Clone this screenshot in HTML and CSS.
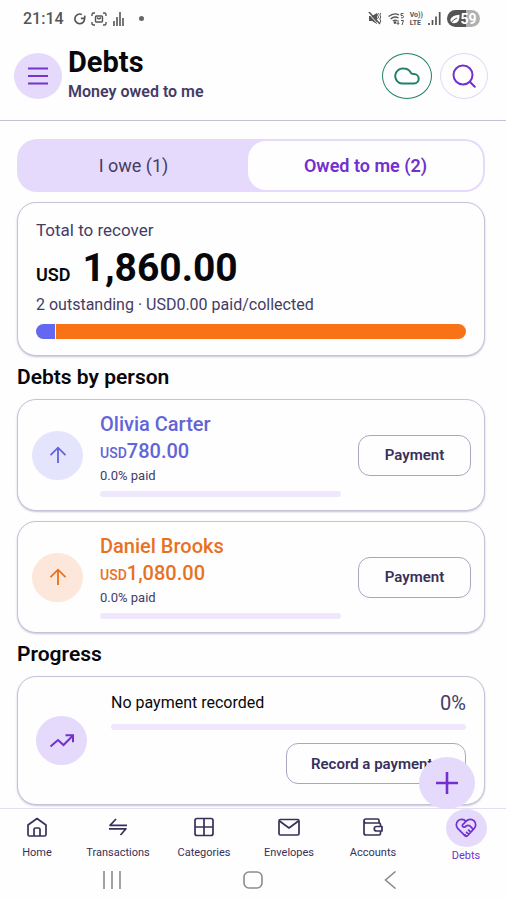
FILE: index.html
```html
<!DOCTYPE html>
<html lang="en">
<head>
<meta charset="utf-8">
<meta name="viewport" content="width=device-width, initial-scale=1">
<title>Debts</title>
<link rel="stylesheet" href="styles.css">
</head>
<body>
<div class="app">
  <div class="status">
    <span class="clock">21:14</span>
    <svg class="st-sync" width="13" height="14" viewBox="0 0 14 14" fill="none" stroke="currentColor" stroke-width="1.800"><path d="M9.500 2.200A5.200 5.200 0 1 0 12.400 6.500M8.500 6.400h4l.3-3"/></svg>
    <svg class="st-frame" width="16" height="14" viewBox="0 0 16 14" fill="none" stroke="currentColor" stroke-width="1.400"><path d="M1 4V2.500Q1 1 2.500 1H4M12 1h1.500Q15 1 15 2.500V4M15 10v1.500Q15 13 13.500 13H12M4 13H2.500Q1 13 1 11.500V10"/><rect x="4.500" y="4" width="7" height="6" rx="1"/><path d="M6 5.500q2 2.500 4 0"/></svg>
    <svg class="st-bars" width="11" height="14" viewBox="0 0 11 14" stroke="currentColor" stroke-width="1.600"><path d="M1 9v5M4 5v9M7 0v14M10 6v8"/></svg>
    <span class="st-dot"></span>
    <span class="grow"></span>
    <svg class="st-mute" width="14" height="13" viewBox="0 0 14 13"><path d="M1 4h3l5-3v11L4 9H1z" fill="currentColor"/><path d="M0 1l11 12" stroke="#fefefe" stroke-width="1"/><path d="M1 0l11 12" stroke="currentColor" stroke-width="1.500"/><path d="M10.500 1l-1 2 1 2-1 2M12.800 1l-1 2 1 2-1 2 1 2-1 2" stroke="currentColor" fill="none"/></svg>
    <svg class="st-wifi" width="17" height="14" viewBox="0 0 17 14" fill="none" stroke="currentColor" stroke-width="1.300"><path d="M.6 4.500Q6 0 11 3M2.600 7Q6.500 3.600 10.500 6M4.800 9Q7 7.400 9 8.600"/><circle cx="7" cy="10.600" r=".8" fill="currentColor"/><path d="M10 8v4M8.800 11l1.200 1.500 1.200-1.500" stroke-width="1"/><path d="M15.500 1.500h-2.500v2q2.600-.4 2.600 1.200t-2.600 1.200M13 8.500h2.500L14 13" stroke-width="1"/></svg>
    <span class="volte"><span>Vo))</span><span>LTE</span></span>
    <svg class="st-signal" width="13" height="13" viewBox="0 0 13 13" stroke="currentColor" stroke-width="1.700"><path d="M1 11v2M4.500 8v5M8 4.500V13M11.700 0v13"/></svg>
    <span class="battery"><svg width="10" height="10" viewBox="0 0 10 10"><path d="M9.500.8Q10 9 4.500 9.200 0 9 .5 5.500 1.500 1.500 9.500.8z" fill="#fff"/><path d="M1 9Q3 5.500 7 4" stroke="#555" fill="none"/></svg>59</span>
  </div>

  <header class="header">
    <button class="round menu" aria-label="Menu"><svg width="22" height="18" viewBox="0 0 22 18" stroke="#7535c8" stroke-width="2"><path d="M1 1.500h20M1 9h20M1 16.500h20"/></svg></button>
    <div class="titles">
      <h1>Debts</h1>
      <p>Money owed to me</p>
    </div>
    <button class="round cloud" aria-label="Sync"><svg width="26" height="18" viewBox="0 0 26 18" fill="none" stroke="#1f8169" stroke-width="2"><path d="M8 16.500h12a4.700 4.700 0 0 0 0-9.400q-1.800 0-2.800-.9C15.500 3 13 1.500 9.500 1.500A7.500 7.500 0 0 0 8 16.500z"/></svg></button>
    <button class="round search" aria-label="Search"><svg width="24" height="24" viewBox="0 0 24 24" fill="none" stroke="#7230cf" stroke-width="2" stroke-linecap="round"><circle cx="11" cy="11" r="9.500"/><path d="M17.800 17.800l5 5"/></svg></button>
  </header>

  <main class="main">
    <div class="tabs" role="tablist">
      <button role="tab" aria-selected="false">I owe (1)</button>
      <button role="tab" aria-selected="true" class="active">Owed to me (2)</button>
    </div>

    <section class="card total">
      <p class="label">Total to recover</p>
      <p class="sum"><span>USD</span><strong>1,860.00</strong></p>
      <p class="note">2 outstanding · USD0.00 paid/collected</p>
      <div class="split"><span class="part-a"></span><span class="part-b"></span></div>
    </section>

    <h2>Debts by person</h2>
    <div class="people">
      <article class="card person indigo">
        <span class="disc"><svg width="18" height="18" viewBox="0 0 18 18" fill="none" stroke="currentColor" stroke-width="1.800"><path d="M9 17V2M1.500 9.200L9 1.700l7.500 7.500"/></svg></span>
        <div class="info">
          <h3>Olivia Carter</h3>
          <p class="amount"><small>USD</small>780.00</p>
          <p class="paid">0.0% paid</p>
          <div class="track"></div>
        </div>
        <button class="outline">Payment</button>
      </article>
      <article class="card person orange">
        <span class="disc"><svg width="18" height="18" viewBox="0 0 18 18" fill="none" stroke="currentColor" stroke-width="1.800"><path d="M9 17V2M1.500 9.200L9 1.700l7.500 7.500"/></svg></span>
        <div class="info">
          <h3>Daniel Brooks</h3>
          <p class="amount"><small>USD</small>1,080.00</p>
          <p class="paid">0.0% paid</p>
          <div class="track"></div>
        </div>
        <button class="outline">Payment</button>
      </article>
    </div>

    <h2>Progress</h2>
    <section class="card progress">
      <span class="disc"><svg width="26" height="16" viewBox="0 0 26 16" fill="none" stroke="currentColor" stroke-width="2"><path d="M1.500 13.500l7.500-6.500 5.500 5L23.500 3M16.500 2.300h7.500v7"/></svg></span>
      <div class="info">
        <div class="line"><span>No payment recorded</span><span class="pct">0%</span></div>
        <div class="track"></div>
        <button class="outline record">Record a payment</button>
      </div>
    </section>
  </main>

  <div class="bottom">
    <button class="fab" aria-label="Add"><svg width="24" height="24" viewBox="0 0 24 24" stroke="#7230cf" stroke-width="2.600"><path d="M12 1v22M1 12h22"/></svg></button>
    <nav class="nav">
      <a href="#"><span class="ic"><svg width="20" height="20" viewBox="0 0 20 20"><path d="M1 8l9-6.500L19 8v9.500q0 1.500-1.500 1.500h-15Q1 19 1 17.500zM7 19v-6.500q0-1.500 1.500-1.500h3q1.500 0 1.500 1.500V19"/></svg></span>Home</a>
      <a href="#"><span class="ic"><svg width="20" height="20" viewBox="0 0 20 20"><path d="M19 8.300H2L8 2M1 11.800h17L12.500 18"/></svg></span>Transactions</a>
      <a href="#"><span class="ic"><svg width="20" height="20" viewBox="0 0 20 20"><rect x="1" y="1.500" width="18" height="17" rx="2"/><path d="M10 1.500v17M1 10h18"/></svg></span>Categories</a>
      <a href="#"><span class="ic"><svg width="22" height="20" viewBox="0 0 22 20"><rect x="1" y="2.500" width="20" height="15.500" rx="1.500"/><path d="M1.500 4L11 11l9.500-7"/></svg></span>Envelopes</a>
      <a href="#"><span class="ic"><svg width="20" height="20" viewBox="0 0 20 20"><path d="M16 6V3.500Q16 2 14.500 2H3Q1 2 1 4t2 2h13q1.500 0 1.500 1.500V9.500M1 4v12q0 2 2 2h13q1.500 0 1.500-1.500V14M19 9.500h-5.500a2.200 2.200 0 0 0 0 4.500H19z"/></svg></span>Accounts</a>
      <a href="#" class="current"><span class="ic"><svg width="24" height="20" viewBox="0 0 24 20"><path d="M12 3.300C9.600.8 6 .8 3.900 2.900s-2.100 5.600 0 7.700l7.200 7.300q1.200 1 2.400-.2l6.600-7c2.100-2.200 2.100-5.700 0-7.800S14.400.8 12 3.300L8.700 6.600q-.9 1.500.6 2.400 1.500.6 2.900-1.100 2-1.200 3.700 0l3.300 3.500M16.800 14.200l-2.700-2.600M14.700 16.400l-2.600-2.500M12.400 18.300l-2-2"/></svg></span>Debts</a>
    </nav>
    <div class="sysbar">
      <svg width="18" height="18" viewBox="0 0 18 18"><path d="M1 0v18M9 0v18M17 0v18"/></svg>
      <svg width="20" height="18" viewBox="0 0 20 18"><rect x="1" y="1" width="18" height="16" rx="5"/></svg>
      <svg width="12" height="18" viewBox="0 0 12 18"><path d="M11.500.5L1.500 9l10 8.500"/></svg>
    </div>
  </div>
</div>
</body>
</html>
```
FILE: styles.css
```css
* { box-sizing: border-box; }

body {
  margin: 0;
  background: #fefefe;
  color: #08080c;
  font-family: Roboto, "Liberation Sans", sans-serif;
}

h1, h2, h3, p { margin: 0; }

button {
  font: inherit;
  color: inherit;
  background: none;
  border: 0;
  padding: 0;
}

svg { display: block; flex: none; }

.app {
  display: flex;
  flex-direction: column;
  min-height: 100vh;
}

/* Status bar */
.status {
  display: flex;
  align-items: center;
  height: 37px;
  padding: 0 26px 0 23px;
  color: #555;
}
.clock { font-size: 16px; font-weight: 500; }
.st-sync { margin-left: 9px; }
.st-frame { margin-left: 5px; }
.st-bars { margin-left: 6px; }
.st-dot {
  width: 5px;
  height: 5px;
  margin-left: 15px;
  border-radius: 50%;
  background: #666;
}
.grow { flex: 1; }
.st-wifi { margin-left: 6px; }
.volte {
  display: flex;
  flex-direction: column;
  margin-left: 5px;
  font-size: 7px;
  font-weight: 700;
  line-height: 8px;
}
.st-signal { margin-left: 5px; }
.battery {
  display: flex;
  align-items: center;
  justify-content: center;
  width: 33px;
  height: 17px;
  margin-left: 6px;
  border-radius: 9px;
  background: linear-gradient(90deg, #555 59%, #b0b0b0 59%);
  color: #fff;
  font-size: 14px;
  font-weight: 700;
}

/* Header */
.header {
  display: flex;
  align-items: center;
  gap: 8px;
  padding: 9px 18px 15px 14px;
  border-bottom: 1px solid #c3c0d6;
}
.round {
  display: flex;
  align-items: center;
  justify-content: center;
  width: 48px;
  height: 46px;
  border-radius: 50%;
}
.menu { background: #e6dafc; }
.cloud { width: 50px; border: 1px solid #1f8169; }
.search { border: 1px solid #e0d8f4; }
.titles { flex: 1; margin-left: -2px; }
.titles h1 { font-size: 29px; line-height: 33px; }
.titles p {
  color: #443c66;
  font-size: 16px;
  font-weight: 600;
  line-height: 26px;
}

/* Content */
.main {
  flex: 1;
  padding: 18px 21px 3px 17px;
}
.tabs {
  display: grid;
  grid-template-columns: 229fr 235fr;
  height: 53px;
  margin-bottom: 10px;
  padding: 2px;
  border-radius: 20px;
  background: #e6dafc;
  color: #443c66;
  font-size: 18px;
}
.tabs .active {
  border-radius: 18px;
  background: #fefefe;
  color: #7230cf;
  font-weight: 600;
}
.card {
  border: 1px solid #c6c2d8;
  border-radius: 19px;
  background: #fefefe;
  box-shadow: 0 1px 2px #c6c2d8;
}
h2 { font-size: 21px; font-weight: 600; line-height: 43px; }

.total { padding: 15px 18px 16px; color: #443c66; font-size: 16px; }
.label { font-size: 17px; line-height: 24px; }
.sum {
  display: flex;
  align-items: baseline;
  gap: 12px;
  color: #08080c;
  line-height: 24px;
}
.sum span { font-size: 18px; font-weight: 600; }
.sum strong { font-size: 39px; font-weight: 700; line-height: 52px; }
.note { line-height: 22px; }
.split {
  display: flex;
  gap: 1px;
  height: 15px;
  margin-top: 8px;
  border-radius: 8px;
  overflow: hidden;
}
.part-a { width: 19px; background: #6467f0; }
.part-b { flex: 1; background: #f97316; }

.disc {
  display: flex;
  flex: none;
  align-items: center;
  justify-content: center;
  width: 51px;
  height: 49px;
  border-radius: 50%;
}
.info { flex: 1; }
.people { display: grid; gap: 10px; }
.person {
  display: flex;
  align-items: center;
  gap: 17px;
  padding: 0 13px 0 14px;
}
.person .info { padding: 11px 0 13px; }
.person h3 { font-size: 20px; font-weight: 500; line-height: 27px; }
.amount { font-size: 20px; font-weight: 500; line-height: 26px; }
.amount small { font-size: 14px; line-height: 16px; }
.paid { color: #443c66; font-size: 13px; line-height: 24px; }
.person .track { margin-top: 3px; }
.indigo { color: #6264d8; }
.indigo .disc { background: #e4e4fd; }
.orange { color: #e8711f; }
.orange .disc { background: #fde6da; }
.track { height: 6px; border-radius: 3px; background: #efe8fc; }
.outline {
  width: 113px;
  height: 41px;
  border: 1px solid #aaa6c2;
  border-radius: 12px;
  color: #38305a;
  font-size: 15px;
  font-weight: 600;
}

.progress {
  display: flex;
  align-items: center;
  gap: 24px;
  padding: 0 18px;
}
.progress .info { padding: 13px 0 20px; }
.progress .disc { background: #e6dafc; color: #7230cf; }
.line {
  display: flex;
  align-items: center;
  justify-content: space-between;
  margin-bottom: 8px;
  font-size: 16px;
  line-height: 26px;
}
.pct { color: #443c66; font-size: 20px; }
.record {
  display: block;
  width: 180px;
  margin: 13px 0 0 auto;
  padding-left: 24px;
  text-align: left;
}

/* Bottom bars */
.bottom { position: relative; }
.fab {
  position: absolute;
  top: -51px;
  right: 31px;
  display: flex;
  align-items: center;
  justify-content: center;
  width: 56px;
  height: 52px;
  border-radius: 50%;
  background: #e6dafc;
}
.nav {
  display: grid;
  grid-template-columns: 74fr 88fr 84fr 86fr 82fr 92fr;
  height: 57px;
  border-top: 1px solid #e3def2;
}
.nav a {
  display: flex;
  flex-direction: column;
  align-items: center;
  color: #38305a;
  font-size: 11px;
  font-weight: 400;
  line-height: 16px;
  text-decoration: none;
}
.nav svg {
  fill: none;
  stroke: currentColor;
  stroke-width: 1.7;
  stroke-linejoin: round;
}
.ic {
  display: flex;
  align-items: center;
  justify-content: center;
  height: 36px;
}
.nav .current { padding-left: 12px; color: #7230cf; }
.current .ic {
  width: 41px;
  height: 38px;
  margin-bottom: 1px;
  border-radius: 50%;
  background: #e6dafc;
}
.sysbar {
  display: flex;
  align-items: center;
  justify-content: space-between;
  height: 35px;
  padding: 0 110px 5px 103px;
}
.sysbar svg { fill: none; stroke: #8c8c8c; stroke-width: 1.6; }
```
